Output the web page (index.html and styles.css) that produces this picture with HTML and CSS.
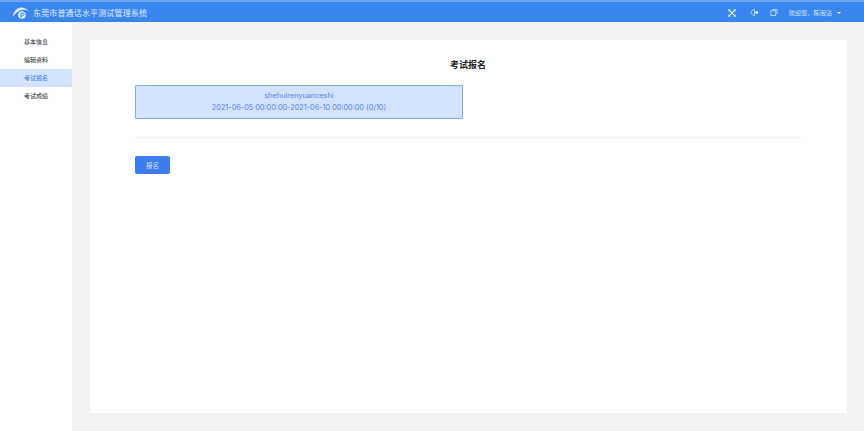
FILE: index.html
```html
<!DOCTYPE html>
<html>
  <head>
    <meta charset="utf-8">
    <title>东莞市普通话水平测试管理系统</title>
    <link rel="stylesheet" href="styles.css">
  </head>
  <body>
    <div class="header">
      <svg class="logo" width="17" height="13" viewBox="0 0 17 13">
        <path d="M.5 11C2 5 5 1.500 9 1.500c3 0 5.500 1.300 7.500 3.500C14 3.800 11.500 3.500 9.500 4 6 4.800 3 7.500.5 11z" fill="#e6f0fe"/>
        <circle cx="10" cy="9" r="3.800" fill="#e6f0fe"/>
        <path d="M9 12V7h1.600a1.300 1.300 0 0 1 0 2.800H9" fill="none" stroke="#3a86f0" stroke-width="1"/>
      </svg>
      <span class="system-name">东莞市普通话水平测试管理系统</span>
      <div class="header-right">
        <svg class="tool-icon" width="8" height="8" viewBox="0 0 10 10">
          <path d="M1.500 1.500l7 7M8.500 1.500l-7 7" stroke="#eaf2fe" stroke-width="1.500"/>
          <path d="M.5 3V.5H3M7 .5h2.500V3M.5 7v2.500H3M7 9.500h2.500V7" fill="none" stroke="#eaf2fe" stroke-width=".9"/>
        </svg>
        <svg class="tool-icon tool-icon-mid" width="9" height="7" viewBox="0 0 9 8">
          <path d="M0 4l3-3.500h1.500v7H3z" fill="none" stroke="#cfe0fb" stroke-width=".9"/>
          <circle cx="7" cy="4" r="1.700" fill="#eaf2fe"/>
        </svg>
        <svg class="tool-icon tool-icon-last" width="8" height="7" viewBox="0 0 8 8">
          <rect x=".5" y="2" width="5.500" height="5.500" fill="none" stroke="#cfe0fb" stroke-width=".9"/>
          <path d="M2 .5h5.500V6" fill="none" stroke="#cfe0fb" stroke-width=".9"/>
        </svg>
        <span class="welcome">欢迎您，陈泡沾</span>
        <span class="caret"></span>
      </div>
    </div>

    <div class="main">
      <div class="sidebar">
        <div class="menu-item">基本信息</div>
        <div class="menu-item">编辑资料</div>
        <div class="menu-item active">考试报名</div>
        <div class="menu-item">考试成绩</div>
      </div>
      <div class="content">
        <div class="card">
          <h1 class="card-title">考试报名</h1>
          <div class="exam-box">
            <div>shehuirenyuanceshi</div>
            <div>2021-06-05 00:00:00-2021-06-10 00:00:00 (0/10)</div>
          </div>
          <div class="divider"></div>
          <button type="button" class="btn-primary">报名</button>
        </div>
      </div>
    </div>
  </body>
</html>
```

FILE: styles.css
```css
* {
  box-sizing: border-box;
}
html, body {
  height: 100%;
}
body {
  display: flex;
  flex-direction: column;
  margin: 0;
  font-family: Inter, "Noto Sans CJK SC", sans-serif;
  font-size: 7px;
  color: #333;
  background-color: #f2f2f2;
  overflow: hidden;
}
.header {
  display: flex;
  align-items: center;
  height: 22px;
  padding: 1px 0 0 12px;
  flex-shrink: 0;
  color: #fff;
  background-color: #3a86f0;
  border-top: 2px solid #6ea6f4;
}
.logo {
  margin-right: 4px;
}
.system-name {
  font-size: 8px;
  letter-spacing: 0.15px;
  color: #e0ecfd;
}
.header-right {
  display: flex;
  align-items: center;
  margin-left: auto;
  padding-right: 23px;
}
.tool-icon {
  margin-right: 14px;
}
.tool-icon-mid {
  margin-right: 11px;
}
.tool-icon-last {
  margin-right: 11px;
}
.welcome {
  font-size: 6.200px;
  color: #dbe9fd;
}
.caret {
  margin-left: 5px;
  border-top: 2px solid #fff;
  border-left: 2px solid transparent;
  border-right: 2px solid transparent;
}
.main {
  display: flex;
  flex: 1;
  min-height: 0;
}
.sidebar {
  width: 72px;
  padding-top: 11px;
  flex-shrink: 0;
  background-color: #fff;
}
.menu-item {
  height: 18px;
  padding-left: 24px;
  line-height: 18px;
  font-size: 6px;
  color: #222;
}
.menu-item.active {
  color: #3a78ee;
  background-color: #d3e3fd;
}
.content {
  flex: 1;
  padding: 18px 17px 18px 18px;
}
.card {
  height: 100%;
  padding: 18px 46px 0 45px;
  background-color: #fff;
}
.card-title {
  margin: 0 0 13px;
  text-align: center;
  font-size: 9px;
  font-weight: 700;
  line-height: 14px;
  color: #222;
}
.exam-box {
  display: flex;
  flex-direction: column;
  justify-content: center;
  gap: 4px;
  width: 328px;
  height: 34px;
  text-align: center;
  font-size: 7.300px;
  line-height: 8px;
  color: #5585e4;
  background-color: #d3e3fd;
  border: 1px solid #7fa8ee;
  border-radius: 1px;
}
.divider {
  margin: 18px 0;
  height: 1px;
  background-color: #efefef;
}
.btn-primary {
  display: block;
  width: 35px;
  height: 18px;
  padding: 0;
  border: none;
  border-radius: 2px;
  font-family: inherit;
  font-size: 6.500px;
  color: #dbe6fb;
  background-color: #3f7cf0;
}
```
